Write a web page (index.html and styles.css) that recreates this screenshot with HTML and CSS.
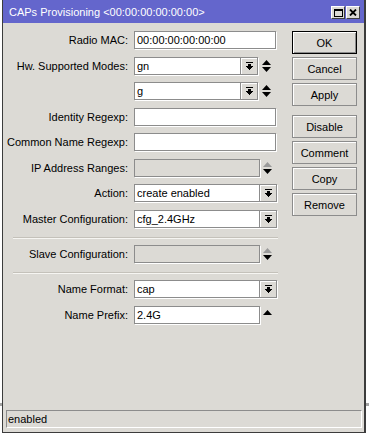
FILE: index.html
```html
<!DOCTYPE html>
<html lang="en">
<head>
    <meta charset="UTF-8">
    <title>CAPs Provisioning</title>
    <link rel="stylesheet" href="styles.css">
</head>
<body>
    <div class="window">
        <div class="titlebar">
            <span class="title">CAPs Provisioning &lt;00:00:00:00:00:00&gt;</span>
            <div class="title-btns">
                <span class="tbtn">
                    <svg width="9" height="8" viewBox="0 0 9 8" shape-rendering="crispEdges"><rect x="0" y="0" width="9" height="2" fill="#000"/><rect x="0" y="0" width="1" height="8" fill="#000"/><rect x="8" y="0" width="1" height="8" fill="#000"/><rect x="0" y="7" width="9" height="1" fill="#000"/></svg>
                </span>
                <span class="tbtn">
                    <svg width="8" height="7" viewBox="0 0 8 7"><path d="M1 0.5 L7 6.5 M7 0.5 L1 6.5" stroke="#000" stroke-width="1.8"/></svg>
                </span>
            </div>
        </div>
        <div class="body">
            <div class="main">
                <div class="form">
                    <div class="row">
                        <span class="label">Radio MAC:</span>
                        <div class="field"><span class="input w-full">00:00:00:00:00:00</span></div>
                    </div>
                    <div class="row">
                        <span class="label">Hw. Supported Modes:</span>
                        <div class="field">
                            <span class="input w-short">gn</span>
                            <span class="dd"><svg width="7" height="8" viewBox="0 0 7 8" shape-rendering="crispEdges"><rect x="0" y="0" width="7" height="1"/><rect x="2" y="2" width="3" height="2"/><polygon points="0,4 7,4 3.5,8"/></svg></span>
                            <span class="spin"><svg width="9" height="12" viewBox="0 0 9 12"><polygon points="4.5,0 9,5 0,5"/><polygon points="0,7 9,7 4.5,12"/></svg></span>
                        </div>
                    </div>
                    <div class="row">
                        <span class="label"></span>
                        <div class="field">
                            <span class="input w-short">g</span>
                            <span class="dd"><svg width="7" height="8" viewBox="0 0 7 8" shape-rendering="crispEdges"><rect x="0" y="0" width="7" height="1"/><rect x="2" y="2" width="3" height="2"/><polygon points="0,4 7,4 3.5,8"/></svg></span>
                            <span class="spin"><svg width="9" height="12" viewBox="0 0 9 12"><polygon points="4.5,0 9,5 0,5"/><polygon points="0,7 9,7 4.5,12"/></svg></span>
                        </div>
                    </div>
                    <div class="row">
                        <span class="label">Identity Regexp:</span>
                        <div class="field"><span class="input w-full"></span></div>
                    </div>
                    <div class="row">
                        <span class="label">Common Name Regexp:</span>
                        <div class="field"><span class="input w-full"></span></div>
                    </div>
                    <div class="row">
                        <span class="label">IP Address Ranges:</span>
                        <div class="field">
                            <span class="input w-mid disabled"></span>
                            <span class="spin spin-after"><svg width="9" height="12" viewBox="0 0 9 12"><polygon points="4.5,0 9,5 0,5" fill="#9a9a9a"/><polygon points="0,7 9,7 4.5,12"/></svg></span>
                        </div>
                    </div>
                    <div class="row">
                        <span class="label">Action:</span>
                        <div class="field">
                            <span class="input w-mid">create enabled</span>
                            <span class="dd"><svg width="7" height="8" viewBox="0 0 7 8" shape-rendering="crispEdges"><rect x="0" y="0" width="7" height="1"/><rect x="2" y="2" width="3" height="2"/><polygon points="0,4 7,4 3.5,8"/></svg></span>
                        </div>
                    </div>
                    <div class="row">
                        <span class="label">Master Configuration:</span>
                        <div class="field">
                            <span class="input w-mid">cfg_2.4GHz</span>
                            <span class="dd"><svg width="7" height="8" viewBox="0 0 7 8" shape-rendering="crispEdges"><rect x="0" y="0" width="7" height="1"/><rect x="2" y="2" width="3" height="2"/><polygon points="0,4 7,4 3.5,8"/></svg></span>
                        </div>
                    </div>
                    <div class="sep"></div>
                    <div class="row">
                        <span class="label">Slave Configuration:</span>
                        <div class="field">
                            <span class="input w-mid disabled"></span>
                            <span class="spin spin-after"><svg width="9" height="12" viewBox="0 0 9 12"><polygon points="4.5,0 9,5 0,5" fill="#9a9a9a"/><polygon points="0,7 9,7 4.5,12"/></svg></span>
                        </div>
                    </div>
                    <div class="sep sep-second"></div>
                    <div class="row">
                        <span class="label">Name Format:</span>
                        <div class="field">
                            <span class="input w-mid">cap</span>
                            <span class="dd"><svg width="7" height="8" viewBox="0 0 7 8" shape-rendering="crispEdges"><rect x="0" y="0" width="7" height="1"/><rect x="2" y="2" width="3" height="2"/><polygon points="0,4 7,4 3.5,8"/></svg></span>
                        </div>
                    </div>
                    <div class="row">
                        <span class="label">Name Prefix:</span>
                        <div class="field">
                            <span class="input w-mid">2.4G</span>
                            <span class="spin spin-after"><svg width="9" height="12" viewBox="0 0 9 12"><polygon points="4.5,1 9,6 0,6"/></svg></span>
                        </div>
                    </div>
                </div>
                <div class="buttons">
                    <button class="btn btn-default">OK</button>
                    <button class="btn">Cancel</button>
                    <button class="btn">Apply</button>
                    <button class="btn btn-group">Disable</button>
                    <button class="btn">Comment</button>
                    <button class="btn">Copy</button>
                    <button class="btn">Remove</button>
                </div>
            </div>
            <div class="status">enabled</div>
        </div>
    </div>
</body>
</html>
```

FILE: styles.css
```css
html, body {
    margin: 0;
    padding: 0;
}
body {
    width: 369px;
    height: 439px;
    overflow: hidden;
    font-family: "Liberation Sans", Arial, sans-serif;
    font-size: 11px;
    color: #000;
    background: linear-gradient(to bottom, #fff 403px, #a4a4a4 403px, #a4a4a4 406px, #fff 406px);
}
.window {
    position: relative;
    margin-left: 2px;
    width: 364px;
    height: 433px;
    box-sizing: border-box;
    border-left: 1px solid #3c3c3c;
    border-right: 2px solid #3c3c3c;
    border-bottom: 1px solid #3c3c3c;
    background: #dcdad5;
    display: flex;
    flex-direction: column;
}
.titlebar {
    height: 23px;
    background: #6466cc;
    display: flex;
    align-items: center;
    justify-content: space-between;
    padding-left: 6px;
}
.title {
    color: #fff;
    font-size: 11px;
    padding-top: 1px;
}
.title-btns {
    display: flex;
    gap: 1px;
    margin-right: 4px;
    margin-top: 2px;
}
.tbtn {
    width: 14px;
    height: 13px;
    box-sizing: border-box;
    background: #dcdad5;
    border: 1px solid;
    border-color: #fff #404040 #404040 #fff;
    display: flex;
    align-items: center;
    justify-content: center;
}
.body {
    flex: 1;
    display: flex;
    flex-direction: column;
}
.main {
    flex: 1;
    display: flex;
    padding-top: 8px;
}
.form {
    width: 277px;
    display: flex;
    flex-direction: column;
    gap: 7.5px;
}
.row {
    display: grid;
    grid-template-columns: 125px 1fr;
    column-gap: 6px;
    align-items: center;
    height: 18px;
}
.label {
    text-align: right;
    white-space: nowrap;
}
.field {
    display: flex;
    align-items: center;
    height: 18px;
}
.input {
    height: 18px;
    box-sizing: border-box;
    background: #fff;
    border: 1px solid #8c8c8c;
    box-shadow: 1px 1px 0 #fff;
    padding-left: 2px;
    line-height: 16px;
    white-space: nowrap;
    overflow: hidden;
}
.input.disabled {
    background: #dcdad5;
}
.w-full {
    width: 142px;
}
.w-short {
    width: 107px;
}
.w-mid {
    width: 126px;
}
.dd {
    width: 17px;
    height: 18px;
    box-sizing: border-box;
    border: 1px solid #8c8c8c;
    border-left: none;
    box-shadow: 1px 1px 0 #fff, inset 1px 1px 0 #fff;
    display: flex;
    align-items: center;
    justify-content: center;
}
.spin {
    margin-left: 4px;
    display: flex;
    align-items: center;
}
.spin-after {
    margin-left: 3px;
}
.sep {
    height: 0;
    margin: 2px 2px -1.5px 10px;
    border-top: 1px solid #c4c1ba;
    border-bottom: 1px solid #f6f5f2;
}
.sep-second {
    margin-top: 1.5px;
}
.buttons {
    margin-left: 12px;
    display: flex;
    flex-direction: column;
    gap: 3px;
}
.btn {
    width: 65px;
    height: 23px;
    margin: 0;
    padding: 0;
    font-family: "Liberation Sans", Arial, sans-serif;
    font-size: 11px;
    color: #000;
    background: #dcdad5;
    border: 1px solid #8c8c8c;
    box-shadow: inset 1px 1px 0 #fff;
}
.btn-default {
    border-color: #000;
    box-shadow: inset 1px 1px 0 #fff, inset -1px -1px 0 #8c8c8c;
}
.btn-group {
    margin-top: 6px;
}
.status {
    margin: 0 2px 4px 3px;
    height: 18px;
    box-sizing: border-box;
    border: 1px solid;
    border-color: #8c8c8c #fff #fff #8c8c8c;
    padding-left: 1px;
    line-height: 16px;
}
```
